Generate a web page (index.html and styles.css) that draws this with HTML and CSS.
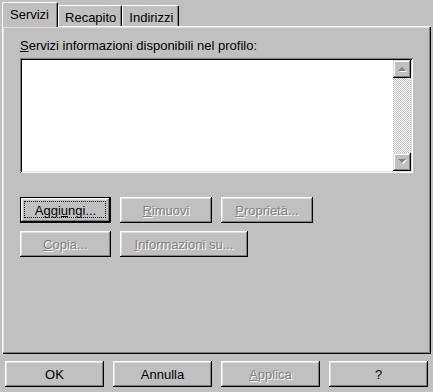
FILE: index.html
```html
<!DOCTYPE html>
<html lang="it">
<head>
<meta charset="utf-8">
<title>Proprietà</title>
<link rel="stylesheet" href="styles.css">
</head>
<body>
<div class="dialog">
  <div class="tabs">
    <div class="tab selected">Servizi</div>
    <div class="tab">Recapito</div>
    <div class="tab">Indirizzi</div>
  </div>
  <div class="panel">
    <div class="label"><u>S</u>ervizi informazioni disponibili nel profilo:</div>
    <div class="listbox">
      <div class="list-area"></div>
      <div class="scrollbar">
        <div class="sb-btn">
          <svg width="9" height="6" viewBox="0 0 9 6"><polygon points="5,2 9,6 1,6" fill="#fff"/><polygon points="4,1 8,5 0,5" fill="#808080"/></svg>
        </div>
        <div class="sb-track"></div>
        <div class="sb-btn">
          <svg width="9" height="6" viewBox="0 0 9 6"><polygon points="1,1 9,1 5,5" fill="#fff"/><polygon points="0,0 8,0 4,4" fill="#808080"/></svg>
        </div>
      </div>
    </div>
    <div class="btn-grid">
      <div class="btn-row">
        <div class="btn default w91">Aggi<u>u</u>ngi...</div>
        <div class="btn disabled w92"><u>R</u>imuovi</div>
        <div class="btn disabled w92"><u>P</u>roprietà...</div>
      </div>
      <div class="btn-row">
        <div class="btn disabled w91"><u>C</u>opia...</div>
        <div class="btn disabled w128"><u>I</u>nformazioni su...</div>
      </div>
    </div>
  </div>
  <div class="footer">
    <div class="btn foot">OK</div>
    <div class="btn foot">Annulla</div>
    <div class="btn foot disabled"><u>A</u>pplica</div>
    <div class="btn foot">?</div>
  </div>
</div>
</body>
</html>
```

FILE: styles.css
```css
html, body {
  margin: 0;
  padding: 0;
  background: #c0c0c0;
}
body {
  width: 433px;
  height: 392px;
  overflow: hidden;
  font-family: "Liberation Sans", Arial, sans-serif;
  font-size: 13px;
  color: #000;
}
u { text-decoration: underline; text-underline-offset: 1px; }

.dialog {
  display: flex;
  flex-direction: column;
  padding-top: 2px;
}

.tabs {
  display: flex;
  align-items: flex-end;
  height: 24px;
  padding-left: 2px;
}
.tab {
  box-sizing: border-box;
  height: 21px;
  padding: 4px 5px 0 6px;
  border-top: 1px solid #fff;
  border-left: 1px solid #fff;
  border-right: 1px solid #000;
  border-radius: 2px 2px 0 0;
  box-shadow: inset -1px 0 #808080;
  line-height: 15px;
  background: #c0c0c0;
}
.tab.selected {
  height: 25px;
  margin-bottom: -1px;
  padding: 4px 8px 0 7px;
  position: relative;
  z-index: 1;
}

.panel {
  box-sizing: border-box;
  width: 429px;
  height: 328px;
  margin-left: 2px;
  padding: 12px 18px 0 18px;
  box-shadow: inset 1px 1px #fff, inset -1px -1px #000, inset -2px -2px #808080, inset 2px 2px #dfdfdf;
  display: flex;
  flex-direction: column;
}
.label {
  line-height: 15px;
  margin-bottom: 5px;
}
.listbox {
  box-sizing: border-box;
  height: 115px;
  padding: 2px;
  background: #fff;
  box-shadow: inset 1px 1px #808080, inset -1px -1px #fff, inset 2px 2px #000, inset -2px -2px #dfdfdf;
  display: flex;
}
.list-area { flex: 1; }
.scrollbar {
  width: 18px;
  display: flex;
  flex-direction: column;
}
.sb-btn {
  box-sizing: border-box;
  height: 18px;
  background: #c0c0c0;
  box-shadow: inset -1px -1px #000, inset 1px 1px #dfdfdf, inset -2px -2px #808080, inset 2px 2px #fff;
  display: flex;
  align-items: center;
  justify-content: center;
}
.sb-btn svg { display: block; }
.sb-track {
  flex: 1;
  background: repeating-conic-gradient(#c0c0c0 0 25%, #fff 0 50%) 0 0 / 2px 2px;
}

.btn-grid {
  margin-top: 24px;
  display: flex;
  flex-direction: column;
  gap: 8px;
}
.btn-row {
  display: flex;
  gap: 9px;
}
.btn {
  box-sizing: border-box;
  height: 26px;
  display: flex;
  align-items: center;
  justify-content: center;
  background: #c0c0c0;
  box-shadow: inset -1px -1px #000, inset 1px 1px #fff, inset -2px -2px #808080, inset 2px 2px #dfdfdf;
  line-height: 15px;
  position: relative;
}
.w91 { width: 91px; }
.w92 { width: 92px; }
.w128 { width: 128px; }
.btn.disabled {
  color: #808080;
  text-shadow: 1px 1px 0 #fff;
}
.btn.default {
  box-shadow: inset 0 0 0 1px #000, inset -2px -2px #000, inset 2px 2px #fff, inset -3px -3px #808080, inset 3px 3px #dfdfdf;
}
.btn.default::after {
  content: "";
  position: absolute;
  left: 4px;
  top: 4px;
  right: 5px;
  bottom: 5px;
  border: 1px dotted #000;
}

.footer {
  display: flex;
  gap: 9px;
  padding: 7px 0 0 5px;
}
.btn.foot { width: 99px; }
```
